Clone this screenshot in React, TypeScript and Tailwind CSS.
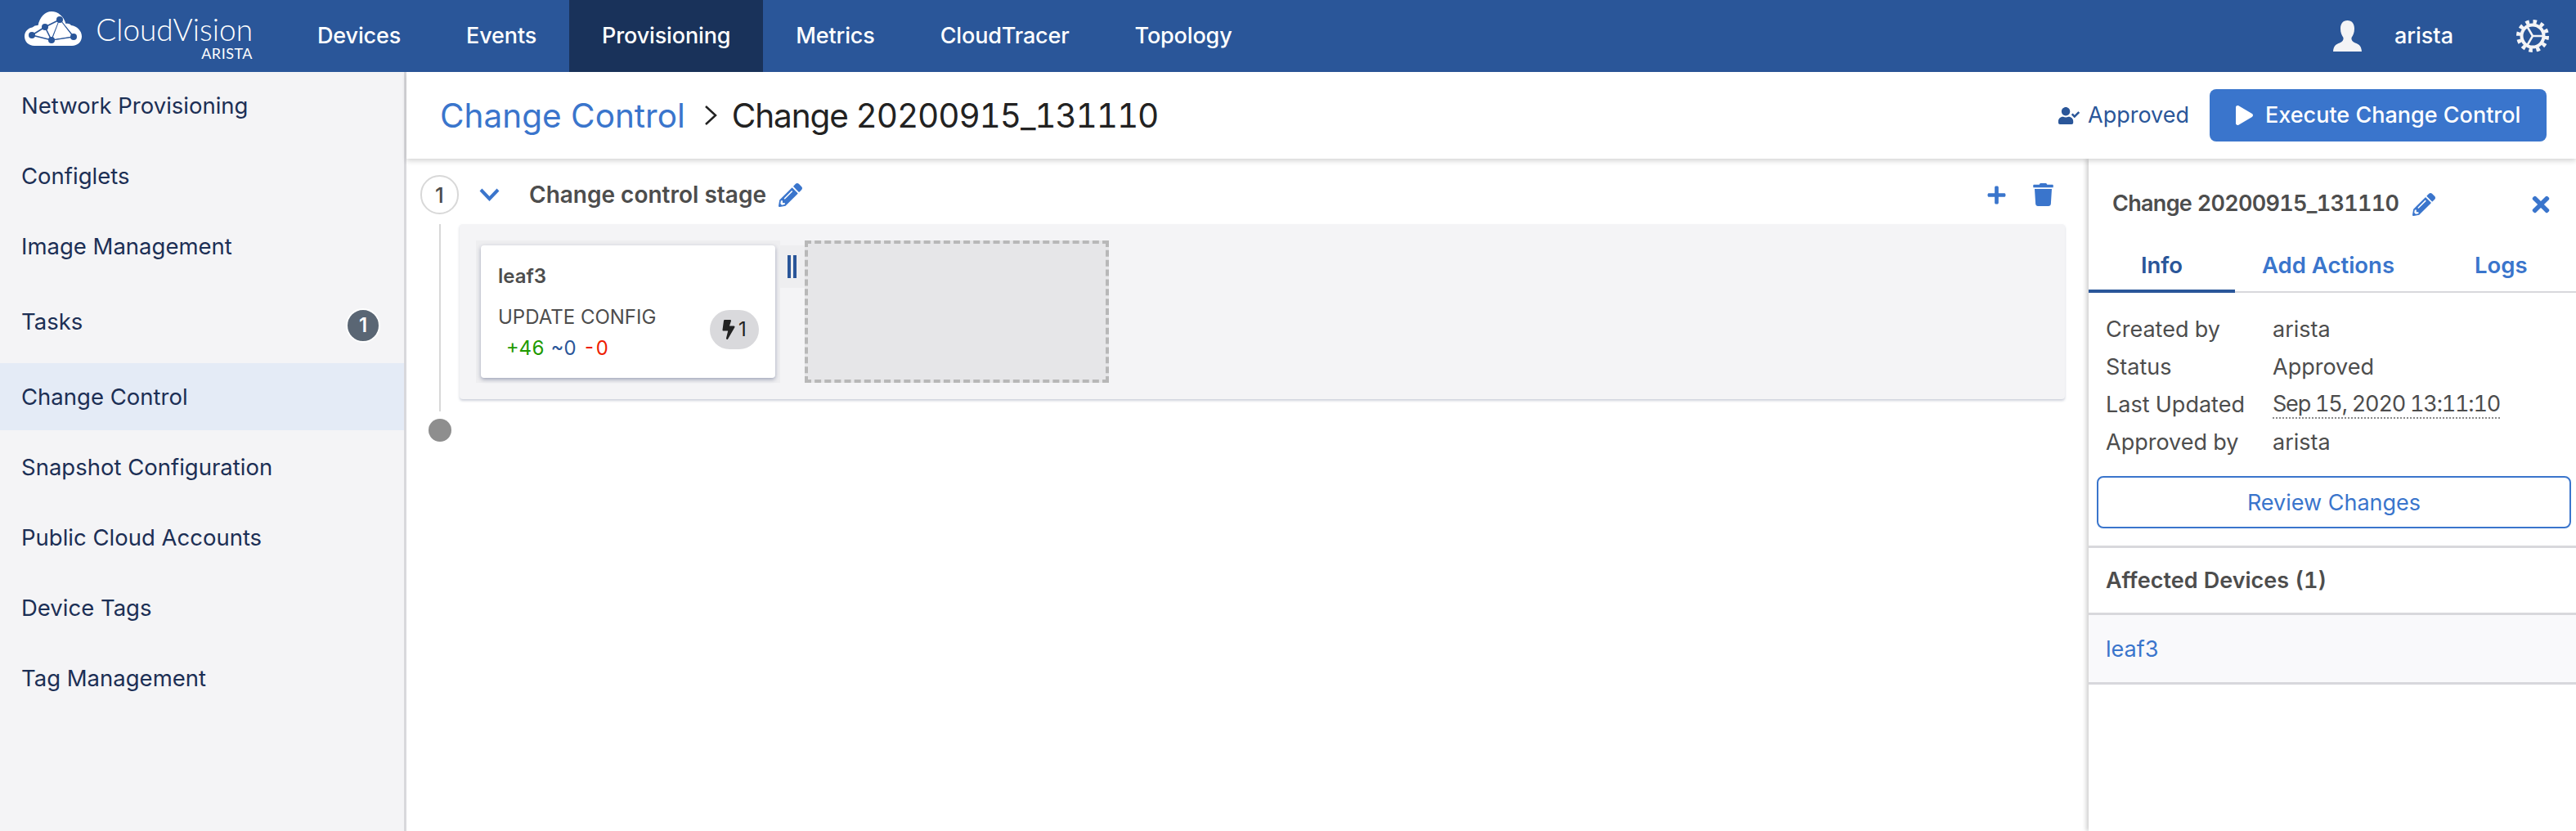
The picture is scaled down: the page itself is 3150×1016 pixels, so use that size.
import { FaBolt, FaPencilAlt, FaPlay, FaPlus, FaTimes, FaTrash, FaUserCheck } from "react-icons/fa";

const navItems = ["Devices", "Events", "Provisioning", "Metrics", "CloudTracer", "Topology"];

const sideItems = [
  "Network Provisioning",
  "Configlets",
  "Image Management",
  "Tasks",
  "Change Control",
  "Snapshot Configuration",
  "Public Cloud Accounts",
  "Device Tags",
  "Tag Management",
];

const infoRows = [
  ["Created by", "arista"],
  ["Status", "Approved"],
  ["Last Updated", "Sep 15, 2020 13:11:10"],
  ["Approved by", "arista"],
];

function CloudLogo() {
  return (
    <svg viewBox="0 0 70 42" className="h-[42px] w-[70px] shrink-0">
      <path
        d="M12 42C5 42 0 37 0 30.500C0 25 4 20.500 9.500 19.500C12 17.500 14 16.800 16.500 17C18.500 7 25 0 33 0C41 0 48 6 50.500 15C53 14.200 55.500 15 57 17C64 18 70 23.500 70 30.500C70 37 65 42 58 42Z"
        fill="#fff"
      />
      <g stroke="#2a5699" strokeWidth="1.600" fill="none">
        <path d="M9 29L25 19L43 10L60 31L33 35L9 29M25 19L33 35L43 10M9 29L25 19" />
      </g>
      <path d="M43 10L58 30L34 34Z" fill="#fff" />
      <g fill="#2a5699">
        <circle cx="43" cy="10" r="4" />
        <circle cx="25" cy="19" r="4" />
        <circle cx="9" cy="29" r="4" />
        <circle cx="33" cy="35" r="4" />
        <circle cx="60" cy="31" r="4" />
      </g>
    </svg>
  );
}

function UserIcon() {
  return (
    <svg viewBox="0 0 35 38" className="h-[38px] w-[35px]" fill="#f4f4f6">
      <path d="M17.500 0C23 0 26 4 26 10C26 15 24.500 18 22.500 21C22 24 23.500 26 27 27.500C31 29 34.500 30.500 35 38H0C0.500 30.500 4 29 8 27.500C11.500 26 13 24 12.500 21C10.500 18 9 15 9 10C9 4 12 0 17.500 0Z" />
    </svg>
  );
}

function GearIcon() {
  return (
    <svg viewBox="0 0 40 40" className="h-10 w-10" fill="none" stroke="#f4f4f6">
      <circle cx="20" cy="20" r="13.500" strokeWidth="4" />
      <circle cx="20" cy="20" r="17.500" strokeWidth="5" strokeDasharray="4.500 4.660" />
      <path d="M20 20L13 8M20 20L34 20M20 20L13 32" strokeWidth="2.500" />
    </svg>
  );
}

function Chevron() {
  return (
    <svg viewBox="0 0 25 16" className="h-4 w-[25px]" fill="none" stroke="#3a75cc" strokeWidth="4">
      <path d="M2 2L12.500 13L23 2" />
    </svg>
  );
}

function TopNav() {
  return (
    <header className="flex h-[88px] shrink-0 items-center bg-[#2a5699] text-white">
      <div className="flex w-[348px] shrink-0 items-start pl-[30px]">
        <CloudLogo />
        <div className="ml-[17px] flex w-[192px] flex-col items-end">
          <span className="text-[37px] leading-[44px] font-light whitespace-nowrap font-['Lato',sans-serif]">
            CloudVision
          </span>
          <span className="-mt-0.5 text-[18px] leading-[18px] font-normal tracking-[0.5px] font-['Lato',sans-serif]">
            ARISTA
          </span>
        </div>
      </div>
      <nav className="flex h-full items-stretch">
        {navItems.map((item) => (
          <div
            key={item}
            className={`flex items-center px-10 text-[27px] font-medium tracking-[-0.15px] ${item === "Provisioning" ? "bg-[#19325a]" : ""}`}
          >
            {item}
          </div>
        ))}
      </nav>
      <div className="ml-auto flex items-center pr-[33px]">
        <UserIcon />
        <span className="ml-10 text-[27px] font-medium">arista</span>
        <span className="ml-[77px]">
          <GearIcon />
        </span>
      </div>
    </header>
  );
}

function Sidebar() {
  const afterTasks = ["Change Control", "Snapshot Configuration", "Public Cloud Accounts", "Device Tags", "Tag Management"];
  return (
    <aside className="flex w-[497px] shrink-0 flex-col gap-1 border-r-[3px] border-[#d8d8dc] bg-[#f4f4f6] pt-px text-[27.5px] text-[#1c2f55]">
      {sideItems.map((item) => (
        <div
          key={item}
          className={`flex items-center justify-between pl-[26px] pr-[29px] ${item === "Tasks" ? "h-[93px]" : "h-[82px]"} ${item === "Change Control" ? "bg-[#e4ebf6]" : ""} ${afterTasks.includes(item) ? "pt-0.5" : ""}`}
        >
          <span>{item}</span>
          {item === "Tasks" && (
            <span className="mt-2 flex h-[42px] w-[42px] items-center justify-center rounded-full border-2 border-white bg-[#5a6674] text-[24px] font-semibold text-white">
              1
            </span>
          )}
        </div>
      ))}
    </aside>
  );
}

function SubHeader() {
  return (
    <div className="relative z-10 flex h-[106px] shrink-0 items-center bg-white pl-[41px] pr-9 shadow-[0_3px_6px_rgba(0,0,0,0.16)]">
      <span className="pt-0.5 text-[40.500px] text-[#3a75cc]">Change Control</span>
      <svg viewBox="0 0 16 26" className="ml-[23px] h-[26px] w-4" fill="none" stroke="#222" strokeWidth="2.500">
        <path d="M2 2L14 13L2 24" />
      </svg>
      <span className="ml-[18px] pt-0.5 text-[40.500px] tracking-[-1.1px] text-[#222] tabular-nums">Change 20200915_131110</span>
      <div className="ml-auto flex items-center text-[27px] text-[#2a5699]">
        <FaUserCheck className="h-[25px] w-[26px]" />
        <span className="ml-2.5">Approved</span>
      </div>
      <button className="ml-[25px] flex h-16 w-[412px] items-center rounded-lg bg-[#3a75cc] pl-8 text-[27px] font-medium text-white">
        <FaPlay className="h-6 w-[21px]" />
        <span className="ml-[15px]">Execute Change Control</span>
      </button>
    </div>
  );
}

function DeviceCard() {
  return (
    <div className="flex h-[174px] w-[372px] items-center justify-center bg-[#eeeef0]">
      <div className="flex h-[162px] w-[360px] flex-col rounded bg-white pl-[21px] pt-[26px] shadow-[0_2px_5px_rgba(60,70,110,0.45)]">
        <span className="text-[24px] leading-6 font-semibold text-[#4d4d4d]">leaf3</span>
        <div className="flex items-start justify-between pr-5">
          <div className="mt-[24px]">
            <div className="text-[24px] leading-7 text-[#4d4d4d]">UPDATE CONFIG</div>
            <div className="mt-[10px] flex gap-2 pl-2.5 text-[24px] leading-7 tabular-nums">
              <span className="text-[#1e9a00]">+46</span>
              <span className="text-[#2a5699]">~0</span>
              <span className="text-[#ee1c00]">-0</span>
            </div>
          </div>
          <div className="mt-[29px] flex h-12 w-[60px] items-center justify-center rounded-full bg-[#d9d9dc] text-[24px] text-[#222]">
            <FaBolt className="h-6 w-[16px]" />
            <span className="ml-1">1</span>
          </div>
        </div>
      </div>
    </div>
  );
}

function Stage() {
  return (
    <div className="grid flex-1 grid-cols-[48px_1fr] grid-rows-[48px_12px_214px_24px_28px] content-start pl-[17px] pr-[29px] pt-5">
      <div className="flex h-12 w-[47px] items-center justify-center rounded-full border-2 border-[#d8d8d8] text-[26px] font-medium text-[#4d4d4d]">
        1
      </div>
      <div className="flex items-center">
        <span className="ml-6">
          <Chevron />
        </span>
        <span className="ml-9 text-[28px] font-semibold text-[#4d4d4d]">Change control stage</span>
        <FaPencilAlt className="ml-[15px] h-[29px] w-[29px] text-[#3a75cc]" />
        <FaPlus className="ml-auto h-[25px] w-[25px] text-[#3a75cc]" />
        <FaTrash className="ml-[32px] mr-[14px] h-[28px] w-[25px] text-[#3a75cc]" />
      </div>
      <div className="col-span-2" />
      <div className="flex justify-center">
        <div className="w-0.5 bg-[#d8d8d8]" />
      </div>
      <div className="flex rounded-sm bg-[#f4f4f6] pl-5 pt-5 shadow-[0_2px_3px_rgba(60,70,110,0.25)]">
        <DeviceCard />
        <div className="mt-1.5 flex h-[52px] w-[30px] items-center gap-[3px] bg-[#eeeef0] pl-[9px]">
          <span className="h-7 w-1 bg-[#2a5699]" />
          <span className="h-7 w-1 bg-[#2a5699]" />
        </div>
        <div className="h-[174px] w-[372px] border-4 border-dashed border-[#b8b8b8] bg-[#e6e6e8]" />
      </div>
      <div className="flex justify-center">
        <div className="mb-[9px] w-0.5 bg-[#d8d8d8]" />
      </div>
      <div />
      <div className="flex justify-center">
        <div className="h-7 w-7 rounded-full bg-[#8e8e8e]" />
      </div>
    </div>
  );
}

function DetailPanel() {
  return (
    <aside className="z-[5] flex w-[596px] shrink-0 flex-col bg-white text-[27px] text-[#4d4d4d] shadow-[-3px_0_5px_rgba(0,0,0,0.18)]">
      <div className="flex h-[108px] items-center pl-[29px] pr-[30px] pt-[3px]">
        <span className="font-semibold tracking-[-0.7px] tabular-nums">Change 20200915_131110</span>
        <FaPencilAlt className="ml-[17px] h-7 w-7 text-[#3a75cc]" />
        <FaTimes className="ml-auto h-[30px] w-[26px] text-[#3a75cc]" />
      </div>
      <div className="flex h-[56px] border-b-2 border-[#d8d8dc] pt-0.5 text-[27.500px] font-semibold text-[#3a75cc]">
        <div className="-mb-0.5 flex w-[179px] items-start justify-center border-b-4 border-[#2a5699] text-[#2a5699]">
          Info
        </div>
        <div className="ml-[33px]">Add Actions</div>
        <div className="ml-[98px]">Logs</div>
      </div>
      <div className="flex flex-col pl-[21px] pt-[22px] tabular-nums">
        {infoRows.map(([label, value]) => (
          <div key={label} className="flex h-[46px] items-center">
            <span className="w-[204px]">{label}</span>
            <span className={label === "Last Updated" ? "border-b-2 border-dotted border-[#8a8a8a] leading-[32px] tracking-[-1.2px]" : ""}>
              {value}
            </span>
          </div>
        ))}
      </div>
      <div className="pl-[10px] pr-[6px]">
        <button className="mt-[18px] h-[64px] w-full rounded-lg border-2 border-[#3a75cc] pt-0.5 text-[#3a75cc]">
          Review Changes
        </button>
      </div>
      <div className="mt-[21px] flex h-[85px] items-center border-y-[3px] border-[#d8d8dc] pl-[21px] pt-0.5 font-semibold tabular-nums">
        Affected Devices (1)
      </div>
      <div className="flex h-[85px] items-center border-b-[3px] border-[#d8d8dc] bg-[#f9f9fb] pl-[21px] pt-0.5 text-[#3a75cc] tabular-nums">
        leaf3
      </div>
    </aside>
  );
}

export default function App() {
  return (
    <div className="flex h-[1016px] w-[3150px] flex-col overflow-hidden bg-white font-['Inter',sans-serif]">
      <TopNav />
      <div className="flex min-h-0 flex-1">
        <Sidebar />
        <main className="flex min-w-0 flex-1 flex-col">
          <SubHeader />
          <div className="flex min-h-0 flex-1">
            <Stage />
            <DetailPanel />
          </div>
        </main>
      </div>
    </div>
  );
}
